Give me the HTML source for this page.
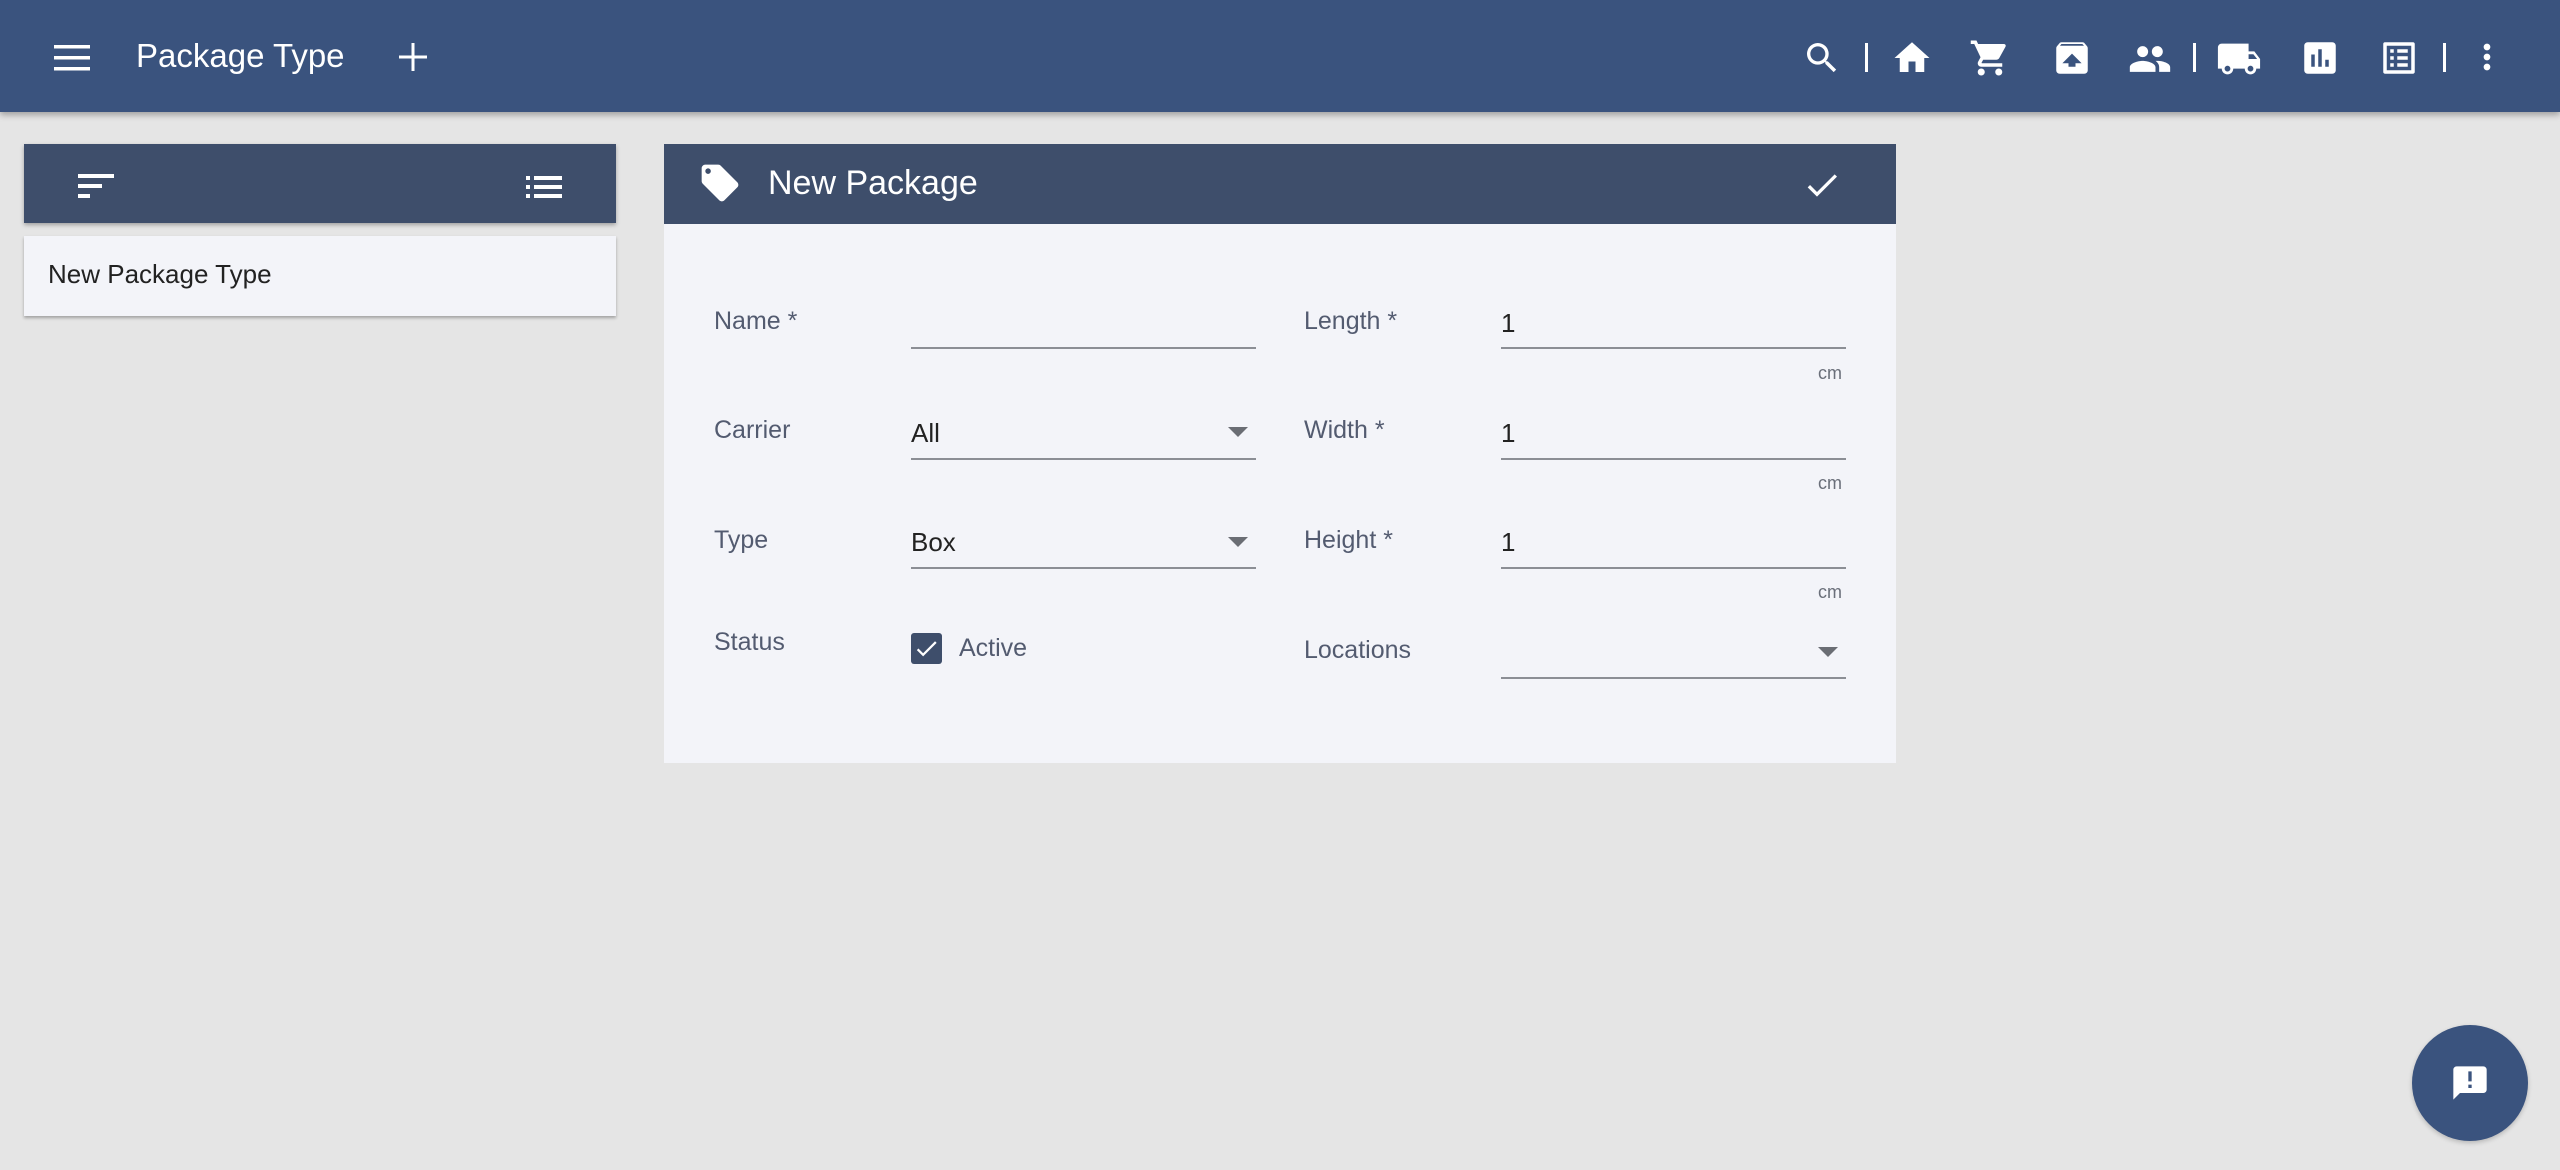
<!DOCTYPE html>
<html><head><meta charset="utf-8"><style>
*{margin:0;padding:0;box-sizing:border-box}
body{width:2560px;height:1170px;background:#e5e5e5;font-family:"Liberation Sans",Arial,sans-serif;position:relative;overflow:hidden}
.abs{position:absolute}
.top{left:0;top:0;width:2560px;height:112px;background:#3a537e;box-shadow:0 3px 6px rgba(0,0,0,.3)}
.lbl{position:absolute;font-size:25px;color:#535b70}
.val{position:absolute;font-size:26px;color:#222}
.ul{position:absolute;height:2px;background:#8b8e95}
.cm{position:absolute;font-size:18px;color:#6a6f7a}
.arr{position:absolute;width:0;height:0;border-left:10px solid transparent;border-right:10px solid transparent;border-top:10px solid #6a6d74}
svg{position:absolute}
</style></head><body>
<div class="abs top"></div>
<svg style="left:54px;top:45px" width="36" height="26"><rect y="0" width="36" height="3.5" fill="#fff"/><rect y="11" width="36" height="3.5" fill="#fff"/><rect y="22" width="36" height="3.5" fill="#fff"/></svg>
<div class="abs" style="left:136px;top:37px;font-size:33px;color:#fff">Package Type</div>
<svg style="left:399px;top:43px" width="28" height="28"><rect x="12.5" width="3" height="28" fill="#fff"/><rect y="12.5" width="28" height="3" fill="#fff"/></svg>

<svg style="left:1802px;top:38px" width="40" height="40" viewBox="0 0 24 24"><path fill="#fff" d="M15.5 14h-.79l-.28-.27A6.47 6.47 0 0016 9.5 6.5 6.5 0 109.5 16c1.61 0 3.09-.59 4.23-1.57l.27.28v.79l5 4.99L20.49 19l-4.99-5zm-6 0C7.01 14 5 11.99 5 9.5S7.01 5 9.5 5 14 7.01 14 9.5 11.99 14 9.5 14z"/></svg>
<div class="abs" style="left:1865px;top:43px;width:3px;height:29px;background:#fff"></div>
<svg style="left:1891px;top:37px" width="42" height="42" viewBox="0 0 24 24"><path fill="#fff" d="M10 20v-6h4v6h5v-8h3L12 3 2 12h3v8z"/></svg>
<svg style="left:1969px;top:37px" width="42" height="42" viewBox="0 0 24 24"><path fill="#fff" d="M7 18c-1.1 0-1.99.9-1.99 2S5.9 22 7 22s2-.9 2-2-.9-2-2-2zM1 2v2h2l3.6 7.59-1.350 2.45c-.16.28-.25.61-.25.96 0 1.1.9 2 2 2h12v-2H7.42c-.14 0-.25-.11-.25-.25l.03-.12.9-1.630h7.45c.75 0 1.41-.41 1.75-1.03l3.58-6.49A1 1 0 0020 4H5.21l-.94-2H1zm16 16c-1.1 0-1.99.9-1.99 2s.89 2 1.99 2 2-.9 2-2-.9-2-2-2z"/></svg>
<svg style="left:2051px;top:37px" width="42" height="42" viewBox="0 0 24 24"><path fill="#fff" d="M20.55 5.22l-1.39-1.68C18.88 3.21 18.47 3 18 3H6c-.47 0-.88.21-1.15.55L3.46 5.22C3.17 5.57 3 6.01 3 6.5V19c0 1.1.89 2 2 2h14c1.1 0 2-.9 2-2V6.5c0-.49-.17-.93-.45-1.28zM12 9.5l5.5 5.5H14v2h-4v-2H6.5L12 9.5zM5.12 5l.82-1h12l.93 1H5.12z"/></svg>
<svg style="left:2128px;top:37px" width="44" height="44" viewBox="0 0 24 24"><path fill="#fff" d="M16 11c1.66 0 2.99-1.34 2.99-3S17.66 5 16 5c-1.66 0-3 1.34-3 3s1.34 3 3 3zm-8 0c1.66 0 2.99-1.34 2.99-3S9.66 5 8 5C6.34 5 5 6.34 5 8s1.34 3 3 3zm0 2c-2.33 0-7 1.17-7 3.5V19h14v-2.5c0-2.33-4.67-3.5-7-3.5zm8 0c-.29 0-.62.02-.97.05 1.16.84 1.970 1.97 1.97 3.45V19h6v-2.5c0-2.33-4.67-3.5-7-3.5z"/></svg>
<div class="abs" style="left:2193px;top:43px;width:3px;height:29px;background:#fff"></div>
<svg style="left:2216px;top:36px" width="46" height="46" viewBox="0 0 24 24"><path fill="#fff" d="M20 8h-3V4H3c-1.1 0-2 .9-2 2v11h2c0 1.66 1.34 3 3 3s3-1.34 3-3h6c0 1.66 1.34 3 3 3s3-1.34 3-3h2v-5l-3-4zM6 18.5c-.83 0-1.5-.67-1.5-1.5s.67-1.5 1.5-1.5 1.5.67 1.5 1.5-.67 1.5-1.5 1.5zm13.5-9l1.96 2.5H17V9.5h2.5zm-1.5 9c-.83 0-1.5-.67-1.5-1.5s.67-1.5 1.5-1.5 1.5.67 1.5 1.5-.67 1.5-1.5 1.5z"/></svg>
<svg style="left:2299px;top:37px" width="42" height="42" viewBox="0 0 24 24"><path fill="#fff" d="M19 3H5c-1.1 0-2 .9-2 2v14c0 1.1.9 2 2 2h14c1.1 0 2-.9 2-2V5c0-1.1-.9-2-2-2zM9 17H7v-7h2v7zm4 0h-2V7h2v10zm4 0h-2v-4h2v4z"/></svg>
<svg style="left:2378px;top:37px" width="42" height="42" viewBox="0 0 24 24"><path fill="#fff" d="M19 5v14H5V5h14m1.1-2H3.9c-.5 0-.9.4-.9.9v16.2c0 .4.4.9.9.9h16.2c.4 0 .9-.5.9-.9V3.9c0-.5-.5-.9-.9-.9zM11 7h6v2h-6V7zm0 4h6v2h-6v-2zm0 4h6v2h-6zM7 7h2v2H7zm0 4h2v2H7zm0 4h2v2H7z"/></svg>
<div class="abs" style="left:2443px;top:43px;width:3px;height:29px;background:#fff"></div>
<svg style="left:2467px;top:37px" width="40" height="40" viewBox="0 0 24 24"><path fill="#fff" d="M12 8c1.1 0 2-.9 2-2s-.9-2-2-2-2 .9-2 2 .9 2 2 2zm0 2c-1.1 0-2 .9-2 2s.9 2 2 2 2-.9 2-2-.9-2-2-2zm0 6c-1.1 0-2 .9-2 2s.9 2 2 2 2-.9 2-2-.9-2-2-2z"/></svg>

<div class="abs" style="left:24px;top:144px;width:592px;height:79px;background:#3e4e6b;box-shadow:0 2px 4px rgba(0,0,0,.3)"></div>
<svg style="left:78px;top:174px" width="36" height="24"><rect width="36" height="4" fill="#fff"/><rect y="10" width="24" height="4" fill="#fff"/><rect y="20" width="12" height="4" fill="#fff"/></svg>
<svg style="left:526px;top:176px" width="36" height="22"><rect width="4" height="4" fill="#fff"/><rect x="8" width="28" height="4" fill="#fff"/><rect y="9" width="4" height="4" fill="#fff"/><rect x="8" y="9" width="28" height="4" fill="#fff"/><rect y="18" width="4" height="4" fill="#fff"/><rect x="8" y="18" width="28" height="4" fill="#fff"/></svg>
<div class="abs" style="left:24px;top:236px;width:592px;height:80px;background:#f3f4f9;box-shadow:0 2px 3px rgba(0,0,0,.3)"></div>
<div class="abs" style="left:48px;top:259px;font-size:26px;color:#222">New Package Type</div>

<div class="abs" style="left:664px;top:144px;width:1232px;height:80px;background:#3e4e6b"></div>
<div class="abs" style="left:664px;top:224px;width:1232px;height:539px;background:#f3f4f9"></div>
<svg style="left:698px;top:161px" width="44" height="44" viewBox="0 0 24 24"><path fill="#fff" d="M21.41 11.58l-9-9C12.05 2.22 11.55 2 11 2H4c-1.1 0-2 .9-2 2v7c0 .55.22 1.05.59 1.42l9 9c.36.36.86.58 1.41.58.55 0 1.05-.22 1.41-.59l7-7c.37-.36.59-.86.59-1.41 0-.55-.23-1.06-.59-1.42zM5.5 7C4.67 7 4 6.330 4 5.5S4.67 4 5.5 4 7 4.67 7 5.5 6.33 7 5.5 7z"/></svg>
<div class="abs" style="left:768px;top:164px;font-size:34px;color:#fff">New Package</div>
<svg style="left:1802px;top:165px" width="40" height="40" viewBox="0 0 24 24"><path fill="#fff" d="M9 16.17L4.83 12l-1.42 1.41L9 19 21 7l-1.41-1.41z"/></svg>

<div class="lbl" style="left:714px;top:307px">Name *</div>
<div class="ul" style="left:911px;top:347px;width:345px"></div>
<div class="lbl" style="left:714px;top:416px">Carrier</div>
<div class="val" style="left:911px;top:418px">All</div>
<div class="arr" style="left:1228px;top:427px"></div>
<div class="ul" style="left:911px;top:458px;width:345px"></div>
<div class="lbl" style="left:714px;top:526px">Type</div>
<div class="val" style="left:911px;top:527px">Box</div>
<div class="arr" style="left:1228px;top:537px"></div>
<div class="ul" style="left:911px;top:567px;width:345px"></div>
<div class="lbl" style="left:714px;top:628px">Status</div>
<div class="abs" style="left:911px;top:633px;width:31px;height:31px;background:#3e4e6b;border-radius:3px"></div>
<svg style="left:913px;top:635px" width="27" height="27" viewBox="0 0 24 24"><path fill="#fff" d="M9 16.17L4.83 12l-1.42 1.41L9 19 21 7l-1.41-1.41z"/></svg>
<div class="lbl" style="left:959px;top:634px">Active</div>

<div class="lbl" style="left:1304px;top:307px">Length *</div>
<div class="val" style="left:1501px;top:308px">1</div>
<div class="ul" style="left:1501px;top:347px;width:345px"></div>
<div class="cm" style="left:1818px;top:363px">cm</div>
<div class="lbl" style="left:1304px;top:416px">Width *</div>
<div class="val" style="left:1501px;top:418px">1</div>
<div class="ul" style="left:1501px;top:458px;width:345px"></div>
<div class="cm" style="left:1818px;top:473px">cm</div>
<div class="lbl" style="left:1304px;top:526px">Height *</div>
<div class="val" style="left:1501px;top:527px">1</div>
<div class="ul" style="left:1501px;top:567px;width:345px"></div>
<div class="cm" style="left:1818px;top:582px">cm</div>
<div class="lbl" style="left:1304px;top:636px">Locations</div>
<div class="arr" style="left:1818px;top:647px"></div>
<div class="ul" style="left:1501px;top:677px;width:345px"></div>

<div class="abs" style="left:2412px;top:1025px;width:116px;height:116px;border-radius:50%;background:#3a537e;box-shadow:0 2px 5px rgba(0,0,0,.2)"></div>
<svg style="left:2450px;top:1063px" width="40" height="40" viewBox="0 0 24 24"><path fill="#fff" d="M20 2H4c-1.1 0-2 .9-2 2v18l4-4h14c1.1 0 2-.9 2-2V4c0-1.1-.9-2-2-2zm-7 9h-2V5h2v6zm0 4h-2v-2h2v2z"/></svg>
</body></html>
